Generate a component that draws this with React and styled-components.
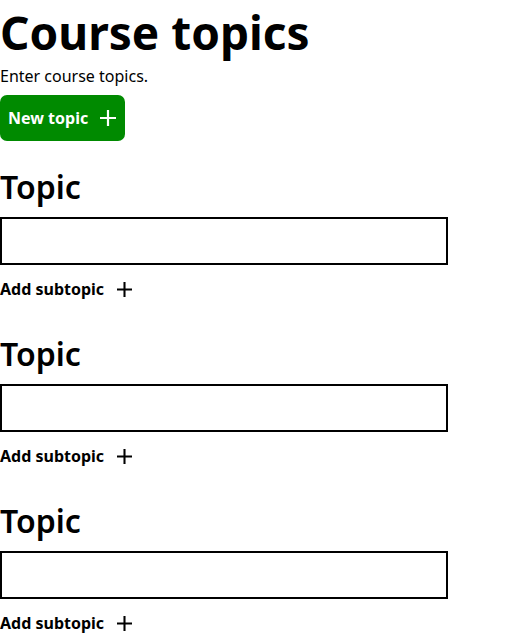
import React from 'react'
import styled, { createGlobalStyle } from 'styled-components'

const GlobalStyle = createGlobalStyle`
  body {
    margin: 0;
    font-family: "Noto Sans", "Open Sans", sans-serif;
    color: #000;
    background: #fff;
  }
`

const Page = styled.main`
  display: flex;
  flex-direction: column;
  align-items: flex-start;
`

const Title = styled.h1`
  margin: 0;
  font-size: 46px;
  font-weight: 700;
  line-height: 65px;
`

const Intro = styled.p`
  margin: 0;
  font-size: 16px;
  line-height: normal;
`

const NewTopicButton = styled.button`
  margin-top: 8px;
  height: 46px;
  display: flex;
  align-items: center;
  gap: 12px;
  padding: 0 9px 0 8px;
  border: none;
  border-radius: 7px;
  background: #008a00;
  color: #fff;
  font-family: inherit;
  font-size: 16px;
  font-weight: 700;
  cursor: pointer;
`

const TopicList = styled.div`
  margin-top: 24px;
  display: flex;
  flex-direction: column;
  gap: 28px;
`

const TopicSection = styled.section`
  display: flex;
  flex-direction: column;
  align-items: flex-start;
`

const TopicHeading = styled.h2`
  margin: 0;
  font-size: 32px;
  font-weight: 600;
  line-height: normal;
`

const TopicInput = styled.input`
  margin-top: 9px;
  box-sizing: border-box;
  width: 448px;
  height: 48px;
  border: 2px solid #000;
  border-radius: 0;
  padding: 0 8px;
  font-family: inherit;
  font-size: 16px;
`

const SubtopicButton = styled.button`
  margin-top: 9px;
  height: 30px;
  display: flex;
  align-items: center;
  gap: 13px;
  padding: 0;
  border: none;
  background: none;
  color: #000;
  font-family: inherit;
  font-size: 16px;
  font-weight: 700;
  cursor: pointer;
`

const PlusIcon = ({ size = 16 }) => (
  <svg width={size} height={size} viewBox="0 0 16 16" fill="none" stroke="currentColor" strokeWidth="2.2">
    <path d="M8 0v16M0 8h16" />
  </svg>
)

export default function App() {
  const topics = [1, 2, 3]
  return (
    <Page>
      <GlobalStyle />
      <Title>Course topics</Title>
      <Intro>Enter course topics.</Intro>
      <NewTopicButton>
        New topic
        <PlusIcon size={16} />
      </NewTopicButton>
      <TopicList>
        {topics.map((t) => (
          <TopicSection key={t}>
            <TopicHeading>Topic</TopicHeading>
            <TopicInput type="text" aria-label="Topic" />
            <SubtopicButton>
              Add subtopic
              <PlusIcon size={15} />
            </SubtopicButton>
          </TopicSection>
        ))}
      </TopicList>
    </Page>
  )
}
